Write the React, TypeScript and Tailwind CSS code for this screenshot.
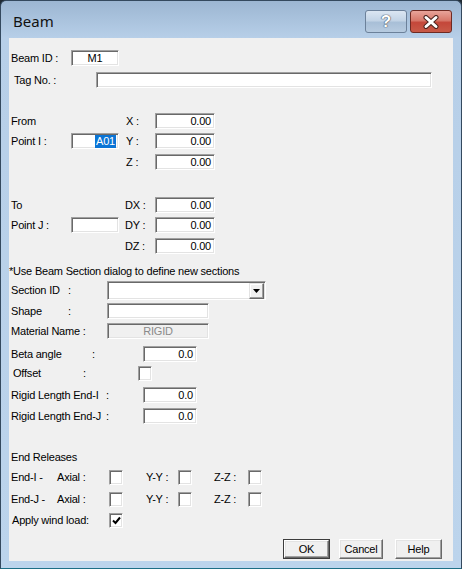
import React from "react";

const sunk =
  "bg-white border border-t-[#a0a0a0] border-l-[#a0a0a0] border-b-white border-r-white shadow-[inset_1px_1px_0_#696969,inset_-1px_-1px_0_#e3e3e3]";

function Field({ cls, value, center }: { cls: string; value?: string; center?: boolean }) {
  return (
    <div className={`${sunk} ${cls} flex items-center ${center ? "justify-center" : "justify-end pr-[3px]"}`}>
      {value}
    </div>
  );
}

function Check({ checked }: { checked?: boolean }) {
  return (
    <div className={`${sunk} w-[14px] h-[15px] flex items-center justify-center`}>
      {checked && (
        <svg width="9" height="9" viewBox="0 0 9 9">
          <path d="M1 4.5 L3.5 7 L8 1.5" fill="none" stroke="#000" strokeWidth="2" />
        </svg>
      )}
    </div>
  );
}

function Btn({ cls, label, def }: { cls: string; label: string; def?: boolean }) {
  return (
    <div
      className={`${cls} h-[20px] flex items-center justify-center bg-[#f0f0f0] ${
        def ? "border border-[#3c3c3c]" : ""
      }`}
    >
      <div className="w-full h-full flex items-center justify-center border border-t-white border-l-white border-b-[#696969] border-r-[#696969] shadow-[inset_-1px_-1px_0_#a0a0a0,inset_1px_1px_0_#e3e3e3]">
        {label}
      </div>
    </div>
  );
}

export default function App() {
  return (
    <div className="w-[462px] h-[569px] bg-[#202a33]">
      <div className="w-full h-full rounded-t-[6px] border border-[#34495e] border-b-[#1d6f86] bg-[linear-gradient(180deg,#9cb6d2_0px,#b7cfe8_37px,#bcd4ec_100%)] flex flex-col">
        {/* title bar */}
        <div className="h-[37px] flex items-start">
          <div className="pl-[12px] pt-[11px] text-[15px] leading-[18px] text-[#111] font-['Noto_Sans',sans-serif]">
            Beam
          </div>
          <div className="ml-auto mt-[9px] mr-[9px] flex gap-[3px]">
            <div className="w-[42px] h-[23px] rounded-[3px] border border-[#6c819a] bg-[linear-gradient(180deg,#dbe6f2_0%,#c3d4e6_45%,#a8bfd7_55%,#b7cbe0_100%)] flex items-center justify-center">
              <span className="text-[17px] font-bold leading-none text-white font-['Liberation_Sans',sans-serif] [text-shadow:0_0_1px_#4a5563,0_0_1px_#4a5563,0_0_1px_#4a5563]">
                ?
              </span>
            </div>
            <div className="w-[42px] h-[23px] rounded-[3px] border border-[#6e2a22] bg-[linear-gradient(180deg,#e8a49a_0%,#d7786a_45%,#c4473a_55%,#c85a48_100%)] flex items-center justify-center">
              <svg width="18" height="14" viewBox="0 0 18 14">
                <path d="M4 2.5 L14 11.5 M14 2.5 L4 11.5" stroke="#4a231e" strokeWidth="5" strokeLinecap="round" />
                <path d="M4 2.5 L14 11.5 M14 2.5 L4 11.5" stroke="#ffffff" strokeWidth="3" strokeLinecap="round" />
              </svg>
            </div>
          </div>
        </div>

        {/* client */}
        <div className="mx-[8px] h-[523px] bg-[#f0f0f0] flex flex-col text-[11px] leading-[13px] tracking-[-0.2px] text-black font-['Liberation_Sans',Arial,sans-serif]">
          <div className="mt-[12px] h-[16px] flex items-center pl-[2px]">
            <span className="w-[60px]">Beam ID :</span>
            <Field cls="w-[48px] h-[16px]" value="M1" center />
          </div>
          <div className="mt-[6px] h-[16px] flex items-center pl-[5px]">
            <span className="w-[82px]">Tag No. :</span>
            <Field cls="w-[336px] h-[16px]" />
          </div>

          <div className="mt-[25px] h-[16px] flex items-center pl-[2px]">
            <span className="w-[115px]">From</span>
            <span className="w-[29px]">X :</span>
            <Field cls="w-[60px] h-[16px]" value="0.00" />
          </div>
          <div className="mt-[4px] h-[16px] flex items-center pl-[2px]">
            <span className="w-[60px]">Point I :</span>
            <div className={`${sunk} w-[48px] h-[16px] flex items-center justify-end pr-[2px]`}>
              <span className="bg-[#0a74d5] text-white h-[13px] px-[1px]">A01</span>
            </div>
            <span className="ml-[7px] w-[29px]">Y :</span>
            <Field cls="w-[60px] h-[16px]" value="0.00" />
          </div>
          <div className="mt-[5px] h-[16px] flex items-center pl-[2px]">
            <span className="w-[115px]"></span>
            <span className="w-[29px]">Z :</span>
            <Field cls="w-[60px] h-[16px]" value="0.00" />
          </div>

          <div className="mt-[27px] h-[16px] flex items-center pl-[2px]">
            <span className="w-[114px]">To</span>
            <span className="w-[30px]">DX :</span>
            <Field cls="w-[60px] h-[16px]" value="0.00" />
          </div>
          <div className="mt-[4px] h-[16px] flex items-center pl-[2px]">
            <span className="w-[60px]">Point J :</span>
            <Field cls="w-[48px] h-[16px]" />
            <span className="ml-[6px] w-[30px]">DY :</span>
            <Field cls="w-[60px] h-[16px]" value="0.00" />
          </div>
          <div className="mt-[5px] h-[16px] flex items-center pl-[2px]">
            <span className="w-[114px]"></span>
            <span className="w-[30px]">DZ :</span>
            <Field cls="w-[60px] h-[16px]" value="0.00" />
          </div>

          <div className="mt-[9px] h-[16px] flex items-center pl-0">
            *Use Beam Section dialog to define new sections
          </div>

          <div className="mt-[2px] h-[19px] flex items-center pl-[2px]">
            <span className="w-[57px]">Section ID</span>
            <span className="w-[39px]">:</span>
            <div className={`${sunk} w-[159px] h-[19px] flex items-center justify-end pr-[1px]`}>
              <div className="w-[15px] h-[16px] bg-[#f0f0f0] border border-t-[#e3e3e3] border-l-[#e3e3e3] border-b-[#696969] border-r-[#696969] shadow-[inset_-1px_-1px_0_#a0a0a0,inset_1px_1px_0_#ffffff] flex items-center justify-center">
                <svg width="7" height="4" viewBox="0 0 7 4">
                  <path d="M0 0 L7 0 L3.5 4 Z" fill="#000" />
                </svg>
              </div>
            </div>
          </div>
          <div className="mt-[3px] h-[16px] flex items-center pl-[2px]">
            <span className="w-[57px]">Shape</span>
            <span className="w-[39px]">:</span>
            <Field cls="w-[102px] h-[16px]" />
          </div>
          <div className="mt-[4px] h-[16px] flex items-center pl-[2px]">
            <span className="w-[96px]">Material Name :</span>
            <div className="w-[102px] h-[16px] bg-[#f0f0f0] border border-t-[#a0a0a0] border-l-[#a0a0a0] border-b-white border-r-white shadow-[inset_1px_1px_0_#696969,inset_-1px_-1px_0_#e3e3e3] flex items-center justify-center text-[#8a8a8a]">
              RIGID
            </div>
          </div>
          <div className="mt-[7px] h-[16px] flex items-center pl-[2px]">
            <span className="w-[81px]">Beta angle</span>
            <span className="w-[51px]">:</span>
            <Field cls="w-[54px] h-[16px]" value="0.0" />
          </div>
          <div className="mt-[4px] h-[15px] flex items-center pl-[4px]">
            <span className="w-[70px]">Offset</span>
            <span className="w-[55px]">:</span>
            <Check />
          </div>
          <div className="mt-[6px] h-[16px] flex items-center pl-[2px]">
            <span className="w-[95px]">Rigid Length End-I</span>
            <span className="w-[37px]">:</span>
            <Field cls="w-[54px] h-[16px]" value="0.0" />
          </div>
          <div className="mt-[5px] h-[16px] flex items-center pl-[2px]">
            <span className="w-[95px]">Rigid Length End-J</span>
            <span className="w-[37px]">:</span>
            <Field cls="w-[54px] h-[16px]" value="0.0" />
          </div>

          <div className="mt-[25px] h-[16px] flex items-center pl-[2px]">End Releases</div>
          <div className="mt-[5px] h-[15px] flex items-center pl-[2px]">
            <span className="w-[46px]">End-I -</span>
            <span className="w-[52px]">Axial :</span>
            <Check />
            <span className="ml-[23px] w-[32px]">Y-Y :</span>
            <Check />
            <span className="ml-[22px] w-[34px]">Z-Z :</span>
            <Check />
          </div>
          <div className="mt-[7px] h-[15px] flex items-center pl-[2px]">
            <span className="w-[46px]">End-J -</span>
            <span className="w-[52px]">Axial :</span>
            <Check />
            <span className="ml-[23px] w-[32px]">Y-Y :</span>
            <Check />
            <span className="ml-[22px] w-[34px]">Z-Z :</span>
            <Check />
          </div>
          <div className="mt-[6px] h-[15px] flex items-center pl-[3px]">
            <span className="w-[97px]">Apply wind load:</span>
            <Check checked />
          </div>

          <div className="mt-[11px] h-[20px] flex items-center pl-[274px]">
            <Btn cls="w-[47px]" label="OK" def />
            <div className="ml-[9px]">
              <Btn cls="w-[44px]" label="Cancel" />
            </div>
            <div className="ml-[12px]">
              <Btn cls="w-[47px]" label="Help" />
            </div>
          </div>
        </div>
      </div>
    </div>
  );
}
